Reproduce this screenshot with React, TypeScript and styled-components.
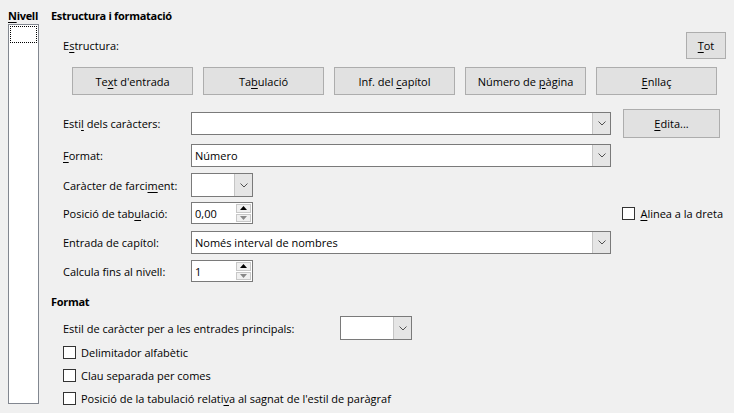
import React from "react";
import styled, { createGlobalStyle } from "styled-components";

const Global = createGlobalStyle`
  html, body { margin: 0; padding: 0; background: #f0f0f0; }
  body { font-family: "Open Sans", "Noto Sans", sans-serif; font-size: 11px; color: #000; }
`;

const Page = styled.div`
  width: 734px;
  height: 413px;
  box-sizing: border-box;
  background: #f0f0f0;
  display: flex;
  padding: 8px 0 0 8px;
  overflow: hidden;
`;

const LeftCol = styled.div`
  width: 31px;
  display: flex;
  flex-direction: column;
`;

const BoldLabel = styled.div`
  font-weight: 700;
  height: 16px;
  line-height: 16px;
  white-space: nowrap;
  letter-spacing: -0.3px;
`;

const ListBox = styled.div`
  height: 380px;
  box-sizing: border-box;
  border: 1px solid #828790;
  background: #fff;
  padding: 1px;
`;

const FocusItem = styled.div`
  height: 15px;
  border: 1px dotted #000;
`;

const Main = styled.div`
  margin-left: 12px;
  width: 675px;
  display: flex;
  flex-direction: column;
`;

const Section = styled.div`
  padding-left: 12px;
  display: flex;
  flex-direction: column;
`;

const Row = styled.div<{ $top: number; $h: number }>`
  margin-top: ${(p) => p.$top}px;
  height: ${(p) => p.$h}px;
  display: flex;
  align-items: center;
  white-space: nowrap;
`;

const Label = styled.div<{ $w?: number }>`
  width: ${(p) => (p.$w ? `${p.$w}px` : "auto")};
  flex: none;
`;

const Mn = styled.span`
  text-decoration: underline;
  text-underline-offset: 2px;
`;

const Button = styled.div<{ $w: number; $h: number; $ml?: number }>`
  width: ${(p) => p.$w}px;
  height: ${(p) => p.$h}px;
  margin-left: ${(p) => p.$ml ?? 0}px;
  box-sizing: border-box;
  background: #e1e1e1;
  border: 1px solid #adadad;
  display: flex;
  align-items: center;
  justify-content: center;
  flex: none;
`;

const ButtonBar = styled.div`
  margin-left: 9px;
  display: flex;
  gap: 10px;
`;

const Spacer = styled.div<{ $w?: number }>`
  flex: ${(p) => (p.$w !== undefined ? `0 0 ${p.$w}px` : "1")};
`;

const Combo = styled.div<{ $w: number; $h: number }>`
  width: ${(p) => p.$w}px;
  height: ${(p) => p.$h}px;
  box-sizing: border-box;
  border: 1px solid #7a7a7a;
  background: #fff;
  display: flex;
  flex: none;
`;

const ComboText = styled.div`
  flex: 1;
  padding-left: 3px;
  display: flex;
  align-items: center;
`;

const DropBtn = styled.div`
  width: 17px;
  border-left: 1px solid #c5c5c5;
  background: #e5e5e5;
  display: flex;
  align-items: center;
  justify-content: center;
`;

const SpinBtns = styled.div`
  width: 15px;
  margin: 1px;
  display: flex;
  flex-direction: column;
  gap: 1px;
`;

const SpinHalf = styled.div`
  flex: 1;
  border: 1px solid #c8c8c8;
  background: #f0f0f0;
  display: flex;
  align-items: center;
  justify-content: center;
`;

const Check = styled.div`
  width: 13px;
  height: 13px;
  box-sizing: border-box;
  border: 1px solid #333;
  background: #fff;
  flex: none;
  margin-right: 5px;
`;

const Chevron = () => (
  <svg width="8" height="5" viewBox="0 0 8 5">
    <polyline points="0.5,0.5 4,4 7.5,0.5" fill="none" stroke="#505050" strokeWidth="1" />
  </svg>
);

const Up = ({ color }: { color: string }) => (
  <svg width="7" height="4" viewBox="0 0 7 4">
    <polygon points="0,4 3.5,0 7,4" fill={color} />
  </svg>
);

const Down = ({ color }: { color: string }) => (
  <svg width="7" height="4" viewBox="0 0 7 4">
    <polygon points="0,0 3.5,4 7,0" fill={color} />
  </svg>
);

const ComboBox = ({ w, h, text }: { w: number; h: number; text?: string }) => (
  <Combo $w={w} $h={h}>
    <ComboText>{text}</ComboText>
    <DropBtn>
      <Chevron />
    </DropBtn>
  </Combo>
);

const SpinBox = ({ value, h }: { value: string; h: number }) => (
  <Combo $w={62} $h={h}>
    <ComboText>{value}</ComboText>
    <SpinBtns>
      <SpinHalf>
        <Up color="#000" />
      </SpinHalf>
      <SpinHalf>
        <Down color="#888" />
      </SpinHalf>
    </SpinBtns>
  </Combo>
);

const LW = 128;

export default function App() {
  return (
    <>
      <Global />
      <Page>
        <LeftCol>
          <BoldLabel>
            <Mn>N</Mn>ivell
          </BoldLabel>
          <ListBox>
            <FocusItem />
          </ListBox>
        </LeftCol>
        <Main>
          <BoldLabel>Estructura i formatació</BoldLabel>
          <Section>
            <Row $top={8} $h={27}>
              <Label>
                E<Mn>s</Mn>tructura:
              </Label>
              <Spacer />
              <Button $w={40} $h={27}>
                <span>
                  <Mn>T</Mn>ot
                </span>
              </Button>
            </Row>
            <Row $top={8} $h={28}>
              <ButtonBar>
                <Button $w={121} $h={28}>
                  <span>
                    Te<Mn>x</Mn>t d'entrada
                  </span>
                </Button>
                <Button $w={121} $h={28}>
                  <span>
                    Ta<Mn>b</Mn>ulació
                  </span>
                </Button>
                <Button $w={121} $h={28}>
                  <span>
                    Inf. del <Mn>c</Mn>apítol
                  </span>
                </Button>
                <Button $w={121} $h={28}>
                  <span>
                    Número de <Mn>p</Mn>àgina
                  </span>
                </Button>
                <Button $w={121} $h={28}>
                  <span>
                    <Mn>E</Mn>nllaç
                  </span>
                </Button>
              </ButtonBar>
            </Row>
            <Row $top={14} $h={29}>
              <Label $w={LW}>
                Esti<Mn>l</Mn> dels caràcters:
              </Label>
              <ComboBox w={420} h={23} />
              <Button $w={97} $h={29} $ml={12}>
                <span>
                  <Mn>E</Mn>dita...
                </span>
              </Button>
            </Row>
            <Row $top={6} $h={23}>
              <Label $w={LW}>
                <Mn>F</Mn>ormat:
              </Label>
              <ComboBox w={420} h={23} text="Número" />
            </Row>
            <Row $top={6} $h={24}>
              <Label $w={LW}>
                Caràcter de farci<Mn>m</Mn>ent:
              </Label>
              <ComboBox w={62} h={24} />
            </Row>
            <Row $top={5} $h={22}>
              <Label $w={LW}>
                Posició de tab<Mn>u</Mn>lació:
              </Label>
              <SpinBox value="0,00" h={22} />
              <Spacer />
              <Check />
              <Label>
                <Mn>A</Mn>linea a la dreta
              </Label>
              <Spacer $w={3} />
            </Row>
            <Row $top={7} $h={23}>
              <Label $w={LW}>Entrada de capítol:</Label>
              <ComboBox w={420} h={23} text="Només interval de nombres" />
            </Row>
            <Row $top={6} $h={22}>
              <Label $w={LW}>Calcula fins al nivell:</Label>
              <SpinBox value="1" h={22} />
            </Row>
          </Section>
          <BoldLabel style={{ marginTop: 12 }}>Format</BoldLabel>
          <Section>
            <Row $top={6} $h={24}>
              <Label $w={277}>Estil de caràcter per a les entrades principals:</Label>
              <ComboBox w={72} h={24} />
            </Row>
            <Row $top={6} $h={13}>
              <Check />
              <Label>Delimitador alfabètic</Label>
            </Row>
            <Row $top={10} $h={13}>
              <Check />
              <Label>Clau separada per comes</Label>
            </Row>
            <Row $top={10} $h={13}>
              <Check />
              <Label>
                Posició de la tabulació relati<Mn>v</Mn>a al sagnat de l'estil de paràgraf
              </Label>
            </Row>
          </Section>
        </Main>
      </Page>
    </>
  );
}
